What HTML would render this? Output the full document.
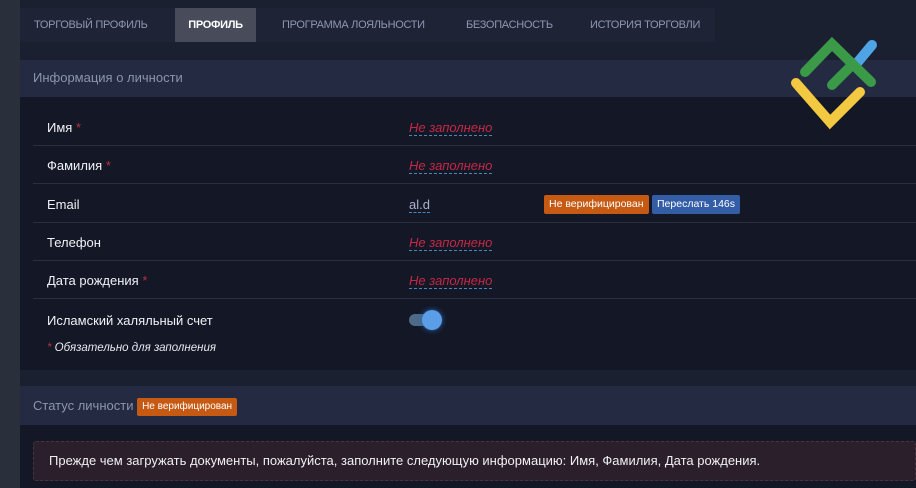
<!DOCTYPE html>
<html><head><meta charset="utf-8"><style>
*{margin:0;padding:0;box-sizing:border-box}
body{width:916px;height:488px;overflow:hidden;background:#1b2031;font-family:"Liberation Sans","Noto Sans CJK SC",sans-serif;position:relative;color:#e6e8ee}
.bgl{position:absolute;left:0;top:0;width:20px;height:488px;background:#2a2f3c}
.tabs{position:absolute;left:20px;top:8px;height:34px;width:695px;background:#1e2336}
.tab{position:absolute;top:0;height:34px;line-height:34px;font-size:11px;color:#8f97b0;letter-spacing:-.3px}
.tab.a{background:#474b5a;color:#fff;font-weight:bold;text-align:center}
.ph{position:absolute;left:20px;width:896px;background:#232a41;color:#8c95ad;font-size:13px;padding-left:13px}
.pc{position:absolute;left:20px;width:896px;background:#131726}
.row{position:absolute;left:13px;right:0;height:38px;border-bottom:1px solid #2a2f40}
.lab{position:absolute;left:14px;top:12px;font-size:13px;color:#f0f2f5}
.st{color:#b5343f}
.nz{position:absolute;left:376px;top:12px;font-size:13px;color:#c42846;font-style:italic;border-bottom:1px dashed #4b86b8;line-height:15px}
.badge{position:absolute;font-size:10.5px;color:#fff;padding:0 5px;height:19px;line-height:19px;border-radius:2px}
.or{background:#c65a13}.bl{background:#335ea6}
</style></head><body>
<div class="bgl"></div>
<div class="tabs">
<div class="tab" style="left:14px">ТОРГОВЫЙ ПРОФИЛЬ</div>
<div class="tab a" style="left:155px;width:81px">ПРОФИЛЬ</div>
<div class="tab" style="left:262px">ПРОГРАММА ЛОЯЛЬНОСТИ</div>
<div class="tab" style="left:446px">БЕЗОПАСНОСТЬ</div>
<div class="tab" style="left:570px">ИСТОРИЯ ТОРГОВЛИ</div>
</div>
<div class="ph" style="top:60px;height:37px;line-height:36px">Информация о личности</div>
<div class="pc" style="top:97px;height:273px">
<div class="row" style="top:11px"><div class="lab">Имя <span class="st">*</span></div><div class="nz">Не заполнено</div></div>
<div class="row" style="top:49px"><div class="lab">Фамилия <span class="st">*</span></div><div class="nz">Не заполнено</div></div>
<div class="row" style="top:88px"><div class="lab">Email</div><div class="nz" style="color:#aab3c8;font-style:normal">al.d</div>
<div class="badge or" style="left:511px;top:10px">Не верифицирован</div><div class="badge bl" style="left:619px;top:10px">Переслать 146s</div></div>
<div class="row" style="top:126px"><div class="lab">Телефон</div><div class="nz">Не заполнено</div></div>
<div class="row" style="top:164px"><div class="lab">Дата рождения <span class="st">*</span></div><div class="nz">Не заполнено</div></div>
<div class="lab" style="left:27px;top:216px">Исламский халяльный счет</div>
<div style="position:absolute;left:389px;top:217px;width:30px;height:12px;border-radius:6px;background:#4d6a87"></div>
<div style="position:absolute;left:402px;top:213px;width:20px;height:20px;border-radius:50%;background:#5b9ee8;box-shadow:0 0 6px #2f6ab0"></div>
<div style="position:absolute;left:27px;top:245px;font-size:11.5px;font-style:italic;color:#e6e8ee"><span class="st">*</span> Обязательно для заполнения</div>
</div>
<div class="ph" style="top:386px;height:39px;line-height:39px">Статус личности <span class="badge or" style="position:relative;display:inline-block;height:18px;line-height:18px;font-size:10px;top:-1px">Не верифицирован</span></div>
<div class="pc" style="top:425px;height:63px">
<div style="position:absolute;left:13px;top:16px;right:0;height:40px;background:#2a1f2b;border:1px dashed #4a3340;border-radius:3px;font-size:13px;line-height:38px;padding-left:15px;color:#f0f0f2">Прежде чем загружать документы, пожалуйста, заполните следующую информацию: Имя, Фамилия, Дата рождения.</div>
</div>
<svg style="position:absolute;left:780px;top:30px" width="110" height="110" viewBox="0 0 110 110">
<g fill="none" stroke-linecap="round" stroke-width="10">
<path d="M77 33 L92 15" stroke="#4fa4e6"/>
<path d="M25 42 L52 14 L91 52" stroke="#3a9a47"/>
<path d="M52 55 L72 35" stroke="#3a9a47"/>
<path d="M16 53 L50 92 L80 62" stroke="#f2c941"/>
</g></svg>
</body></html>
